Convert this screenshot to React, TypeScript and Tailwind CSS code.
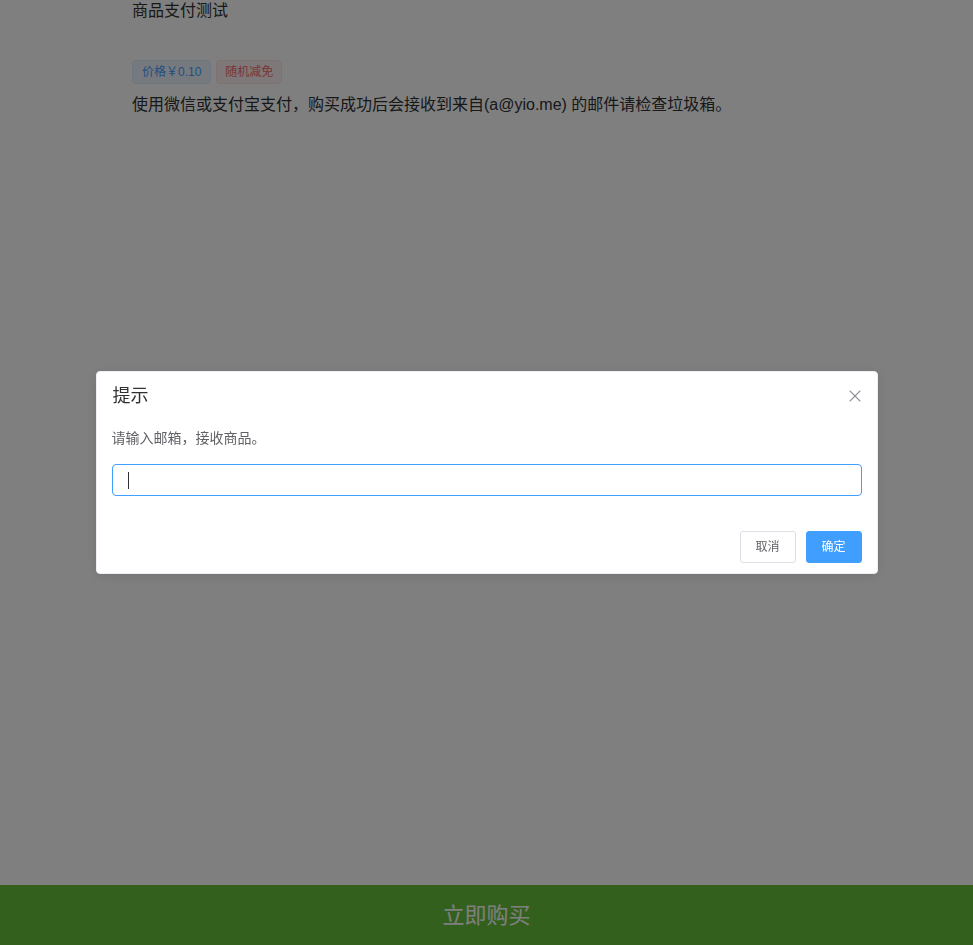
import { X } from "lucide-react";

const font = { fontFamily: '"Liberation Sans", "Noto Sans CJK SC", sans-serif' };

export default function App() {
  return (
    <div className="relative min-h-[945px] bg-white" style={font}>
      {/* Page content */}
      <div className="px-[132px]">
        <h1 className="text-[16px] leading-[22px] text-[#303133]">商品支付测试</h1>

        <div className="mt-[38px] flex gap-[5px]">
          <span className="h-[24px] px-[9px] leading-[22px] text-[12px] rounded border border-[#d9ecff] bg-[#ecf5ff] text-[#409eff]">
            价格￥0.10
          </span>
          <span className="h-[24px] px-[8px] leading-[22px] text-[12px] rounded border border-[#fde2e2] bg-[#fef0f0] text-[#f56c6c]">
            随机减免
          </span>
        </div>

        <p className="mt-[10px] text-[16px] leading-[22px] text-[#303133]">
          使用微信或支付宝支付，购买成功后会接收到来自(a@yio.me) 的邮件请检查垃圾箱。
        </p>
      </div>

      {/* Buy bar */}
      <div className="fixed bottom-0 left-0 right-0 h-[60px] bg-[#67c23a] flex items-center justify-center text-white text-[22px]">
        立即购买
      </div>

      {/* Overlay + message box */}
      <div className="fixed inset-0 z-10 bg-black/50 flex items-center justify-center">
        <div className="w-[782px] bg-white rounded border border-[#ebeef5] shadow-[0_2px_12px_0_rgba(0,0,0,0.1)] pb-[10px]">
          <div className="flex items-center justify-between px-[16px] pt-[12px] pb-[10px]">
            <span className="text-[18px] leading-[24px] text-[#303133]">提示</span>
            <X className="w-[20px] h-[20px] -mr-[4px] text-[#909399]" strokeWidth={1.3} />
          </div>

          <div className="px-[15px] pt-[8px] pb-[10px]">
            <p className="text-[14px] leading-[24px] text-[#606266]">请输入邮箱，接收商品。</p>
            <div className="mt-[14px] h-[32px] rounded border border-[#409eff] flex items-center px-[15px]">
              <span className="w-px h-[17px] bg-[#303133]" />
            </div>
          </div>

          <div className="flex justify-end gap-[10px] px-[15px] pt-[25px]">
            <button className="w-[56px] h-[32px] rounded-[3px] border border-[#dcdfe6] bg-white text-[12px] text-[#606266]">
              取消
            </button>
            <button className="w-[56px] h-[32px] rounded-[3px] border border-[#409eff] bg-[#409eff] text-[12px] text-white">
              确定
            </button>
          </div>
        </div>
      </div>
    </div>
  );
}
